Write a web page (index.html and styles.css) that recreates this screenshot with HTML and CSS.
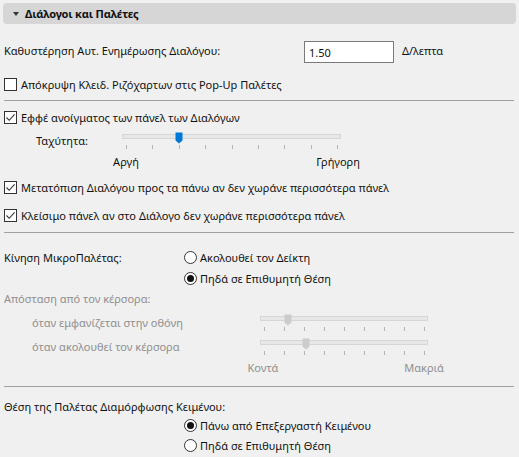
FILE: index.html
```html
<!DOCTYPE html>
<html lang="el">
<head>
<meta charset="utf-8">
<link rel="stylesheet" href="styles.css">
</head>
<body>
<div class="panel">
  <div class="header">
    <span class="tri"></span>
    <span class="title">Διάλογοι και Παλέτες</span>
  </div>

  <div class="row row-delay">
    <span class="delay-label">Καθυστέρηση Αυτ. Ενημέρωσης Διαλόγου:</span>
    <span class="input">1.50</span>
    <span class="unit">Δ/λεπτα</span>
  </div>

  <div class="row row-hide">
    <span class="check"></span>
    <span>Απόκρυψη Κλειδ. Ριζόχαρτων στις Pop-Up Παλέτες</span>
  </div>

  <div class="sep sep-1"></div>

  <div class="row row-effect">
    <span class="check checked"><svg viewBox="0 0 13 13" width="13" height="13"><path d="M2.5 6.5 L5.2 9.3 L10.6 3.4" fill="none" stroke="#333" stroke-width="1.1"/></svg></span>
    <span>Εφφέ ανοίγματος των πάνελ των Διαλόγων</span>
  </div>

  <div class="row row-speed">
    <span class="speed-label">Ταχύτητα:</span>
    <div class="slider slider-speed">
      <div class="track"></div>
      <svg class="thumb thumb-speed" viewBox="0 0 8 12" width="8" height="12"><path d="M0.5 0.5 H7.5 V8.5 L4 11.5 L0.5 8.5 Z" fill="#0078d7"/></svg>
      <div class="ticks">
        <i></i><i></i><i></i><i></i><i></i><i></i><i></i><i></i><i></i>
      </div>
    </div>
  </div>

  <div class="row ends ends-speed">
    <span class="end"><span>Αργή</span></span>
    <span class="end"><span>Γρήγορη</span></span>
  </div>

  <div class="row row-shift">
    <span class="check checked"><svg viewBox="0 0 13 13" width="13" height="13"><path d="M2.5 6.5 L5.2 9.3 L10.6 3.4" fill="none" stroke="#333" stroke-width="1.1"/></svg></span>
    <span>Μετατόπιση Διαλόγου προς τα πάνω αν δεν χωράνε περισσότερα πάνελ</span>
  </div>

  <div class="row row-close">
    <span class="check checked"><svg viewBox="0 0 13 13" width="13" height="13"><path d="M2.5 6.5 L5.2 9.3 L10.6 3.4" fill="none" stroke="#333" stroke-width="1.1"/></svg></span>
    <span>Κλείσιμο πάνελ αν στο Διάλογο δεν χωράνε περισσότερα πάνελ</span>
  </div>

  <div class="sep sep-2"></div>

  <div class="row row-move">
    <span class="col-label">Κίνηση ΜικροΠαλέτας:</span>
    <span class="radio"></span>
    <span>Ακολουθεί τον Δείκτη</span>
  </div>
  <div class="row row-radio">
    <span class="col-label"></span>
    <span class="radio on"></span>
    <span>Πηδά σε Επιθυμητή Θέση</span>
  </div>

  <div class="row row-dist disabled">
    <span>Απόσταση από τον κέρσορα:</span>
  </div>

  <div class="row row-dslider disabled">
    <span class="dist-label">όταν εμφανίζεται στην οθόνη</span>
    <div class="slider slider-dist">
      <div class="track"></div>
      <svg class="thumb thumb-d1" viewBox="0 0 8 12" width="8" height="12"><path d="M0.5 0.5 H7.5 V8.5 L4 11.5 L0.5 8.5 Z" fill="#cccccc"/></svg>
      <div class="ticks">
        <i></i><i></i><i></i><i></i><i></i><i></i><i></i><i></i><i></i>
      </div>
    </div>
  </div>

  <div class="row row-dslider disabled">
    <span class="dist-label">όταν ακολουθεί τον κέρσορα</span>
    <div class="slider slider-dist">
      <div class="track"></div>
      <svg class="thumb thumb-d2" viewBox="0 0 8 12" width="8" height="12"><path d="M0.5 0.5 H7.5 V8.5 L4 11.5 L0.5 8.5 Z" fill="#cccccc"/></svg>
      <div class="ticks">
        <i></i><i></i><i></i><i></i><i></i><i></i><i></i><i></i><i></i>
      </div>
    </div>
  </div>

  <div class="row ends ends-dist disabled">
    <span class="end"><span>Κοντά</span></span>
    <span class="end"><span>Μακριά</span></span>
  </div>

  <div class="sep sep-3"></div>

  <div class="row row-textpos">
    <span>Θέση της Παλέτας Διαμόρφωσης Κειμένου:</span>
  </div>
  <div class="row">
    <span class="col-label"></span>
    <span class="radio on"></span>
    <span>Πάνω από Επεξεργαστή Κειμένου</span>
  </div>
  <div class="row">
    <span class="col-label"></span>
    <span class="radio"></span>
    <span>Πηδά σε Επιθυμητή Θέση</span>
  </div>
</div>
</body>
</html>
```

FILE: styles.css
```css
html, body {
  margin: 0;
  padding: 0;
  background: #f0f0f0;
}

body {
  font-family: "Noto Sans", "Open Sans", sans-serif;
  font-size: 11px;
  color: #111;
  width: 519px;
  height: 457px;
  overflow: hidden;
}

.panel {
  padding: 0 5px 0 4px;
}

.header {
  margin: 3px -2px 0 -1px;
  height: 21px;
  background: #d6d6d6;
  border-radius: 4px;
  display: flex;
  align-items: center;
}

.tri {
  width: 0;
  height: 0;
  border-left: 3.5px solid transparent;
  border-right: 3.5px solid transparent;
  border-top: 4px solid #333;
  margin: 1px 6px 0 10px;
}

.title {
  font-weight: bold;
  font-size: 11px;
  letter-spacing: -0.2px;
}

.row {
  display: flex;
  align-items: center;
  height: 20px;
  white-space: nowrap;
}

.row-delay {
  height: 22px;
  margin-top: 17px;
}

.delay-label {
  width: 300px;
  position: relative;
  top: -2px;
}

.input {
  box-sizing: border-box;
  width: 90px;
  height: 22px;
  background: #fff;
  border: 1px solid #7a7a7a;
  padding-left: 4px;
  display: flex;
  align-items: center;
}

.unit {
  margin-left: 8px;
  position: relative;
  top: -2px;
}

.row-hide {
  margin-top: 11px;
}

.check {
  box-sizing: border-box;
  width: 13px;
  height: 13px;
  border: 1px solid #333;
  background: #fff;
  margin-right: 4px;
  flex: none;
  position: relative;
}

.check svg {
  position: absolute;
  left: -1px;
  top: -1px;
}

.sep {
  height: 1px;
  background: #a0a0a0;
}

.sep-1 { margin-top: 6px; }

.row-effect { margin-top: 6px; }

.row-speed { margin-top: 3px; }

.speed-label {
  margin-left: 32px;
  width: 86px;
}

.slider {
  position: relative;
  align-self: flex-start;
}

.slider-speed {
  width: 219px;
  margin-top: 4px;
}

.track {
  box-sizing: border-box;
  height: 5px;
  border: 1px solid #d6d6d6;
  background: #e7e7e7;
}

.thumb {
  position: absolute;
  top: -2px;
}

.thumb-speed { left: 53px; }

.ticks {
  display: flex;
  justify-content: space-between;
  margin-top: 6px;
  padding: 0 3px 0 4px;
}

.ticks i {
  display: block;
  width: 1px;
  height: 4px;
  background: #b4b4b4;
}

.ends {
  justify-content: space-between;
}

.end {
  width: 0;
  display: flex;
  justify-content: center;
}

.ends-speed {
  margin-left: 122px;
  width: 212px;
  margin-top: 1px;
}

.row-shift { margin-top: 6px; }
.row-close { margin-top: 8px; }

.sep-2 { margin-top: 7px; }

.row-move { margin-top: 14px; }

.col-label {
  width: 180px;
}

.radio {
  box-sizing: border-box;
  width: 13px;
  height: 13px;
  border: 1px solid #333;
  border-radius: 50%;
  background: #fff;
  margin-right: 3px;
  display: flex;
  align-items: center;
  justify-content: center;
  flex: none;
}

.radio.on::after {
  content: "";
  width: 7px;
  height: 7px;
  border-radius: 50%;
  background: #111;
}

.row-radio { margin-top: 1px; }

.disabled {
  color: #8f8f8f;
}

.row-dist { margin-top: 0; }

.row-dslider {
  margin-top: 4px;
}

.dist-label {
  margin-left: 28px;
  width: 228px;
}

.slider-dist {
  width: 168px;
  margin-top: 4px;
}

.thumb-d1 { left: 24px; }
.thumb-d2 { left: 42px; }

.ends-dist {
  margin-left: 259px;
  width: 161px;
  margin-top: 1px;
}

.sep-3 { margin-top: 9px; }

.row-textpos {
  margin-top: 11px;
  height: 17px;
}
```
